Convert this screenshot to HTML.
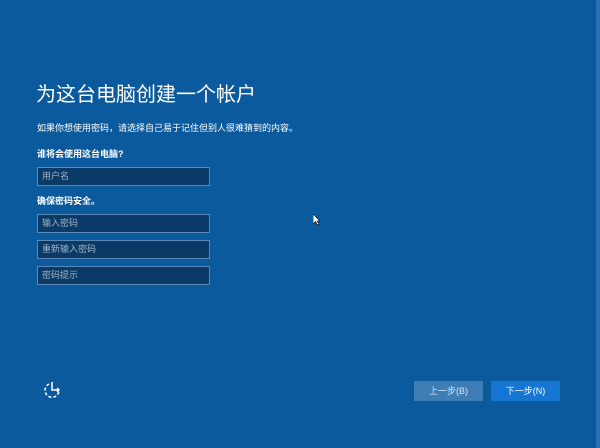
<!DOCTYPE html>
<html><head><meta charset="utf-8"><style>
html,body{margin:0;padding:0}
body{width:600px;height:448px;background:#0b5a9d;position:relative;overflow:hidden;font-family:"Liberation Sans","Noto Sans CJK SC",sans-serif;color:#fff}
.a{position:absolute;white-space:nowrap}
.in{position:absolute;left:37px;width:171px;height:17px;background:#0c3a66;border:1px solid #5a87b3;font-size:9px;color:#9fb4c9;line-height:17px;text-indent:4px}
.btn{position:absolute;top:381px;width:69px;height:20px;font-size:9px;line-height:20px;text-align:center}
</style></head><body>
<div class="a" style="left:36px;top:78px;font-size:20px;">为这台电脑创建一个帐户</div>
<div class="a" style="left:37px;top:121px;font-size:9px;">如果你想使用密码，请选择自己易于记住但别人很难猜到的内容。</div>
<div class="a" style="left:37px;top:147px;font-size:9px;font-weight:bold;">谁将会使用这台电脑?</div>
<div class="in" style="top:167px">用户名</div>
<div class="a" style="left:37px;top:194px;font-size:9px;font-weight:bold;">确保密码安全。</div>
<div class="in" style="top:214px">输入密码</div>
<div class="in" style="top:240px">重新输入密码</div>
<div class="in" style="top:266px">密码提示</div>
<svg class="a" style="left:42px;top:380px" width="20" height="20" viewBox="0 0 20 20" fill="none" stroke="#fff" stroke-width="1.5">
<path d="M7 4 A7 7 0 1 0 17 11" stroke-dasharray="3 2"/><path d="M10 2 V10 H17"/><path d="M15 8 L17 10 L15 12"/></svg>
<div class="btn" style="left:414px;background:#3f7db6;color:#d8e4f0">上一步(B)</div>
<div class="btn" style="left:491px;background:#1676d4;color:#fff">下一步(N)</div>
<svg class="a" style="left:313px;top:214px" width="8" height="12" viewBox="0 0 8 12"><path d="M0 0 V10 L2.5 7.5 L4.5 11 L6 10 L4 7 H7 Z" fill="#fff" stroke="#000" stroke-width=".6"/></svg>
<div class="a" style="right:0;top:0;width:4px;height:448px;background:#2a6fae"></div>
</body></html>
